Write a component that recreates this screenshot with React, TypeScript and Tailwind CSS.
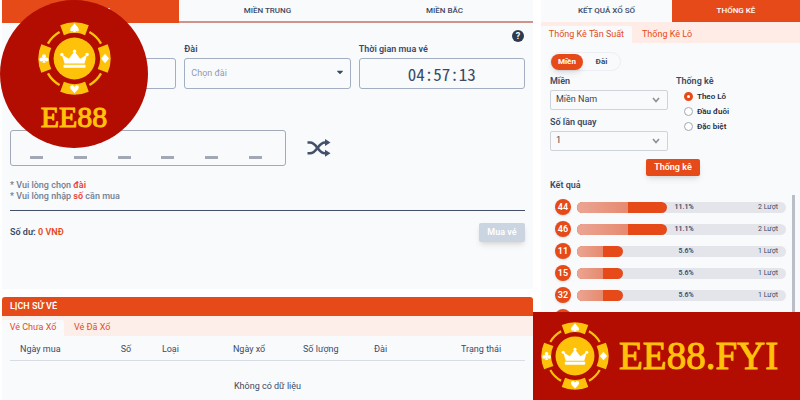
import React, { useState } from "react";
import { FaCaretDown } from "react-icons/fa";

const regions = ["Miền Nam", "Miền Trung", "Miền Bắc"];

const historyColumns = [
  { title: "Ngày mua", width: "w-[21.5%] pl-2.5" },
  { title: "Số", width: "w-[8%]" },
  { title: "Loại", width: "w-[13.8%]" },
  { title: "Ngày xổ", width: "w-[13.6%]" },
  { title: "Số lượng", width: "w-[13.8%]" },
  { title: "Đài", width: "w-[16.9%]" },
  { title: "Trạng thái", width: "w-[12.4%]" },
];

const results = [
  { number: "44", percent: "11.1%", count: 2, bar: 43 },
  { number: "46", percent: "11.1%", count: 2, bar: 43 },
  { number: "11", percent: "5.6%", count: 1, bar: 22 },
  { number: "15", percent: "5.6%", count: 1, bar: 22 },
  { number: "32", percent: "5.6%", count: 1, bar: 22 },
  { number: "35", percent: "5.6%", count: 1, bar: 22 },
];

function Chip({ className }: { className?: string }) {
  return (
    <svg viewBox="-110 -110 220 220" className={className} aria-hidden="true">
      <g fill="#ffc20a">
        <circle r="63" />
        {[0, 90, 180, 270].map((angle) => (
          <g key={angle} transform={`rotate(${angle})`}>
            <path d="M-43 -100 A109 109 0 0 1 43 -100 L32 -70 A77 77 0 0 0 -32 -70 Z" />
            <path d="M-80 -45 A92 92 0 0 1 -45 -80" fill="none" stroke="#ffc20a" strokeWidth="7" />
          </g>
        ))}
      </g>
      <g fill="#fff">
        <path transform="translate(0 -92)" d="M0 -14 C4 -7 13 -2 13 5 C13 11 5 12 2 7 L5 13 H-5 L-2 7 C-5 12 -13 11 -13 5 C-13 -2 -4 -7 0 -14 Z" />
        <g transform="translate(-92 0)">
          <circle cy="-7" r="6" />
          <circle cx="-8" cy="3" r="6" />
          <circle cx="8" cy="3" r="6" />
          <path d="M-2 -5 L-6 1 V5 L-2 5 L-5 13 H5 L2 5 L6 5 V1 L2 -5 Z" />
        </g>
        <path transform="translate(92 0)" d="M0 -14 L12 0 L0 14 L-12 0 Z" />
        <path transform="translate(0 92)" d="M0 13 C-4 7 -13 2 -13 -5 C-13 -12 -4 -14 0 -6 C4 -14 13 -12 13 -5 C13 2 4 7 0 13 Z" />
        <path d="M-30 15 L-38 -12 L-17 1 L0 -22 L17 1 L38 -12 L30 15 Z" />
        <circle cx="-38" cy="-12" r="5" />
        <circle cx="38" cy="-12" r="5" />
        <circle cy="-22" r="5" />
        <rect x="-33" y="19" width="66" height="9" rx="2" />
      </g>
    </svg>
  );
}

function ShuffleIcon() {
  return (
    <svg viewBox="0 0 24 18" className="h-[18px] w-6" aria-hidden="true">
      <g fill="none" stroke="currentColor" strokeWidth="2.6">
        <path d="M0.5 3.5 H3 C10 3.5 11 14.3 18 14.3 H19" />
        <path d="M0.5 14.3 H3 C10 14.3 11 3.5 18 3.5 H19" />
      </g>
      <path fill="currentColor" d="M18 0 L23.5 3.5 L18 7 Z M18 10.8 L23.5 14.3 L18 17.8 Z" />
    </svg>
  );
}

function StatSelect({ id, label, options }: { id: string; label: string; options: string[] }) {
  return (
    <div>
      <label htmlFor={id} className="block text-[9px] leading-3 font-semibold text-[#3b4a66]">{label}</label>
      <div className="relative mt-[3px]">
        <select id={id} className="block h-5 w-full appearance-none rounded-xs border border-[#cfd3da] bg-[#f8fafc] px-[5px] text-[9px] text-[#3f444d]">
          {options.map((o) => <option key={o}>{o}</option>)}
        </select>
        <svg viewBox="0 0 8 6" className="pointer-events-none absolute top-[7px] right-2 h-1.5 w-2" fill="none" stroke="#8b9099" strokeWidth="1.6">
          <path d="M1 1 L4 4.5 L7 1" />
        </svg>
      </div>
    </div>
  );
}

function TicketForm() {
  return (
    <section className="h-[289px] bg-[#f8fafc] text-[#3b4a66]">
      <div className="grid h-[23px] grid-cols-3 text-[8px] font-medium">
        {regions.map((r, i) => (
          <button
            key={r}
            className={i === 0 ? "bg-[#e64a19] pb-0.5 text-white uppercase" : "border-b-2 border-[#d0938a] uppercase"}
          >
            {r}
          </button>
        ))}
      </div>

      <div className="px-2">
        <div className="flex h-5 justify-end pt-[7px]">
          <button aria-label="Trợ giúp" className="mr-px h-3 w-3 rounded-full bg-[#2c3b52] text-[9px] leading-3 font-bold text-white">?</button>
        </div>
        <div className="grid grid-cols-3 items-end gap-2">
          <input type="text" aria-label="Ngày" className="h-[31px] w-full rounded-[3px] border border-[#a3aec2]" />
          <div>
            <label htmlFor="station" className="block text-[9px] leading-3 font-semibold">Đài</label>
            <div className="relative mt-[3px]">
              <select id="station" className="block h-[31px] w-full appearance-none rounded-[3px] border border-[#a3aec2] px-1.5 text-[9px] text-[#8f9bb3]">
                <option>Chọn đài</option>
              </select>
              <FaCaretDown className="pointer-events-none absolute top-[9px] right-1.5 h-2.5 w-2.5" />
            </div>
          </div>
          <div>
            <div className="text-[9px] leading-3 font-semibold">Thời gian mua vé</div>
            <div className="mt-[3px] h-[31px] rounded-[3px] border border-[#a3aec2] text-center font-['Noto_Sans_Mono_CJK_JP','Roboto',sans-serif] text-[17px] leading-[29px]">
              04:57:13
            </div>
          </div>
        </div>

        <div className="mt-[41px] flex items-center">
          <div className="grid h-9 w-[276px] grid-cols-6 rounded-[3px] border border-[#a3a9b8] pr-2 pl-1">
            {[1, 2, 3, 4, 5, 6].map((n) => (
              <input key={n} type="text" maxLength={1} aria-label={`Số ${n}`} className="h-7 w-[13px] justify-self-center border-b-3 border-[#a3a8b5]" />
            ))}
          </div>
          <button aria-label="Chọn ngẫu nhiên" className="ml-[21px] text-[#42506a]">
            <ShuffleIcon />
          </button>
        </div>

        <div className="mt-3.5 border-b border-[#42506a] pb-2 text-[9px] leading-[11px] font-medium text-[#737f92]">
          <p>* Vui lòng chọn <span className="font-semibold text-[#ee4136]">đài</span></p>
          <p>* Vui lòng nhập <span className="font-semibold text-[#ee4136]">số</span> cần mua</p>
        </div>

        <div className="mt-3 flex items-center justify-between text-[9px] font-semibold">
          <p>Số dư: <span className="text-[#e64a19]">0 VNĐ</span></p>
          <button disabled className="h-[19px] w-[46px] rounded-xs bg-[#cbd5e1] text-white shadow-md">Mua vé</button>
        </div>
      </div>
    </section>
  );
}

function TicketHistory() {
  return (
    <section className="bg-[#f8fafc] text-[#3b4a66]">
      <h2 className="h-[19px] rounded-t-[3px] bg-[#e64a19] px-2 text-[9px] leading-[19px] font-semibold text-white uppercase">Lịch sử vé</h2>
      <div className="flex h-5 items-end bg-[#fdeeea] text-[9px] text-[#e64a19]">
        <button className="h-4 w-[62px] rounded-t-xs bg-[#f8fafc]">Vé Chưa Xổ</button>
        <button className="h-4 px-2.5">Vé Đã Xổ</button>
      </div>
      <div className="px-2 pt-1">
        <table className="w-full table-fixed text-[9px]">
          <thead>
            <tr className="h-5 border-b border-[#d8dde5] text-left">
              {historyColumns.map((c) => (
                <th key={c.title} className={`${c.width} font-normal whitespace-nowrap`}>{c.title}</th>
              ))}
            </tr>
          </thead>
          <tbody>
            <tr>
              <td colSpan={7} className="h-[52px] text-center">Không có dữ liệu</td>
            </tr>
          </tbody>
        </table>
      </div>
    </section>
  );
}

function Statistics() {
  const [mode, setMode] = useState("Theo Lô");

  return (
    <section className="h-full bg-[#f8fafc] text-[#3b4a66]">
      <div className="grid h-[22px] grid-cols-[131fr_128fr] text-[8px] font-medium uppercase">
        <button className="uppercase">Kết quả xổ số</button>
        <button className="bg-[#e64a19] text-white uppercase">Thống kê</button>
      </div>
      <div className="flex h-[21px] items-end bg-[#ffece7] text-[9px] text-[#e64a19]">
        <button className="h-[17px] w-[91px] rounded-t-xs bg-[#f8fafc]">Thống Kê Tần Suất</button>
        <button className="h-[17px] px-2.5">Thống Kê Lô</button>
      </div>

      <div className="pt-[9px] pl-[9px]">
        <div className="flex h-[19px] w-fit items-center rounded-full border border-[#eceff3] text-[8px] font-bold">
          <button className="h-4 w-8 rounded-full bg-[#e64a19] text-white shadow-md">Miền</button>
          <button className="h-4 w-[37px]">Đài</button>
        </div>

        <div className="mt-1 flex gap-2">
          <div className="flex w-[118px] flex-col gap-1.5">
            <StatSelect id="region" label="Miền" options={regions} />
            <StatSelect id="draws" label="Số lần quay" options={["1", "2", "3"]} />
          </div>
          <fieldset>
            <legend className="text-[9px] leading-3 font-semibold">Thống kê</legend>
            <div className="mt-0.5 flex flex-col pl-2">
              {["Theo Lô", "Đầu đuôi", "Đặc biệt"].map((m) => (
                <label key={m} className="flex h-[15px] items-center gap-1 text-[8px] font-semibold text-[#252d3d]">
                  <input
                    type="radio"
                    name="mode"
                    checked={mode === m}
                    onChange={() => setMode(m)}
                    className="h-[9px] w-[9px] appearance-none rounded-full border border-[#a4a8b0] bg-white checked:border-3 checked:border-[#e64a19]"
                  />
                  {m}
                </label>
              ))}
            </div>
          </fieldset>
        </div>

        <button className="mt-2 ml-24 block h-[17px] w-[54px] rounded-xs bg-[#e64a19] text-[9px] font-semibold text-white shadow-md">Thống kê</button>

        <h3 className="mt-[3px] text-[9px] leading-3 font-semibold">Kết quả</h3>
        <div className="mt-1 mr-[5px] flex border-r-3 border-[#b9bec7] pr-1.5">
          <ul className="flex-1 pt-px pl-[5px]">
            {results.map((r) => (
              <li key={r.number} className="flex h-[22px] items-center gap-1.5">
                <span className="h-4 w-4 rounded-full bg-[#e64a19] text-center text-[9px] leading-4 font-semibold text-white shadow">{r.number}</span>
                <div className="relative grid h-[11px] flex-1 grid-cols-[58fr_42fr] items-center rounded-full bg-[#e3e5ea] pr-2 text-right text-[7px] leading-[11px]">
                  <div className="absolute inset-y-0 left-0 flex overflow-hidden rounded-full bg-[#e64a19]" style={{ width: `${r.bar}%` }}>
                    <div className="w-[57%] bg-linear-to-r from-[#eba593] to-[#e68a70]" />
                  </div>
                  <span className="font-semibold">{r.percent}</span>
                  <span>{r.count} Lượt</span>
                </div>
              </li>
            ))}
          </ul>
        </div>
      </div>
    </section>
  );
}

export default function App() {
  return (
    <div className="relative h-screen overflow-hidden bg-white font-['Roboto',sans-serif]">
      <main className="grid h-full grid-cols-[41fr_20fr] gap-2 pl-0.5">
        <div className="flex min-w-0 flex-col gap-2">
          <TicketForm />
          <TicketHistory />
        </div>
        <Statistics />
      </main>

      <div className="absolute top-0 left-0 flex h-[148px] w-[148px] flex-col items-center rounded-full bg-[#b30c00] pt-[22px] font-['Liberation_Serif',serif] text-[30px] leading-9 text-[#ffc20a]">
        <Chip className="h-[73px] w-[73px]" />
        <span className="mt-1 [-webkit-text-stroke:1px_#ffc20a]">EE88</span>
      </div>

      <div className="absolute right-0 bottom-0 flex h-[88px] w-[267px] items-center gap-2.5 bg-[#b30c00] pl-2 font-['Liberation_Serif',serif] text-[39px] text-[#ffc20a]">
        <Chip className="h-[68px] w-[68px]" />
        <span className="[-webkit-text-stroke:1px_#ffc20a]">EE88.FYI</span>
      </div>
    </div>
  );
}
